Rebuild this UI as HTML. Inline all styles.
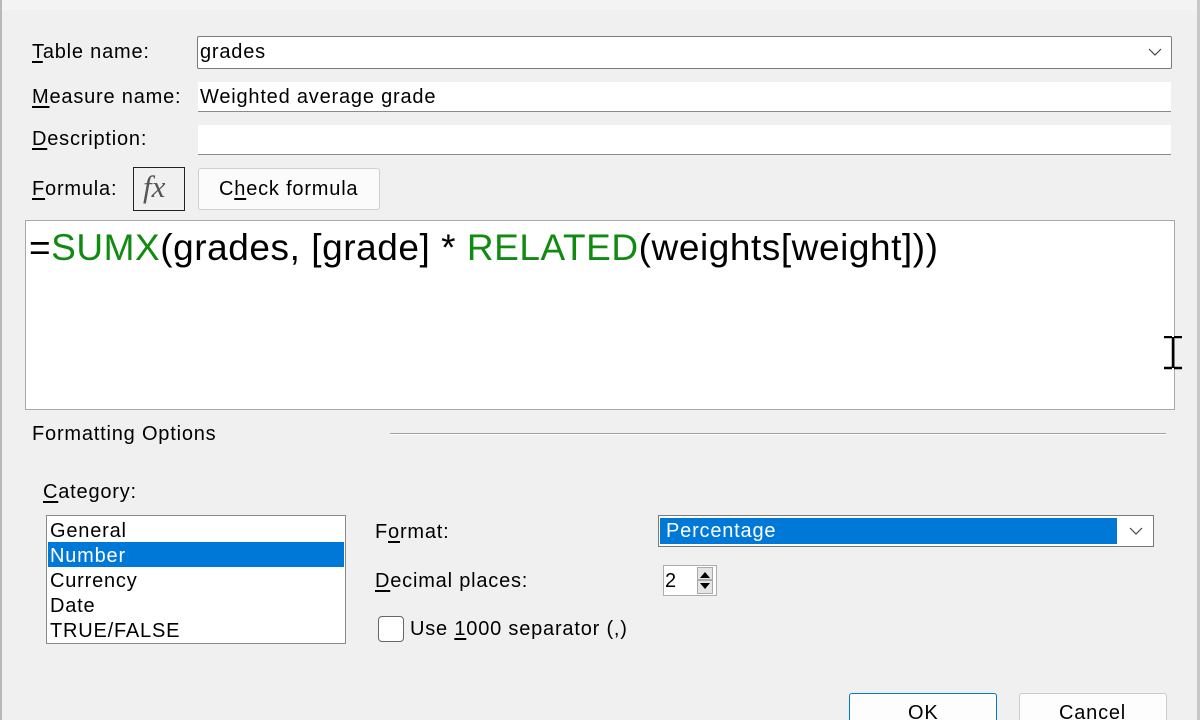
<!DOCTYPE html>
<html style="overflow:hidden"><head><style>
html,body{overflow:hidden}
body{margin:0;width:1200px;height:720px;background:#f0f0f0;position:relative;overflow:hidden;font-family:"Liberation Sans",sans-serif;font-size:20px;letter-spacing:0.8px;color:#000}
.a{position:absolute;white-space:nowrap}
.box{position:absolute;background:#fff;box-sizing:border-box}
u{text-decoration:underline;text-underline-offset:3px}
</style></head><body>
<div class="a" style="left:0;top:0;width:1200px;height:11px;background:#f3f3f3"></div>
<div class="a" style="left:0;top:0;width:2px;height:720px;background:#b8b8b8"></div>
<div class="a" style="left:1197px;top:0;width:3px;height:720px;background:#c8c8c8"></div>

<div class="a" style="left:32px;top:41px"><u>T</u>able name:</div>
<div class="box" style="left:197px;top:36px;width:975px;height:33px;border:1px solid #7a7a7a;border-radius:2px"></div>
<div class="a" style="left:200px;top:41px">grades</div>
<svg class="a" style="left:1148px;top:47px" width="14" height="10"><path d="M1 2 L7 8 L13 2" fill="none" stroke="#444" stroke-width="1.2"/></svg>

<div class="a" style="left:32px;top:86px"><u>M</u>easure name:</div>
<div class="box" style="left:198px;top:82px;width:973px;height:30px;border-bottom:1px solid #8a8a8a"></div>
<div class="a" style="left:200px;top:86px">Weighted average grade</div>

<div class="a" style="left:32px;top:128px"><u>D</u>escription:</div>
<div class="box" style="left:198px;top:125px;width:973px;height:30px;border-bottom:1px solid #8a8a8a"></div>

<div class="a" style="left:32px;top:178px"><u>F</u>ormula:</div>
<div class="box" style="left:133px;top:167px;width:52px;height:44px;border:1px solid #222;background:#f0f0f0"></div>
<div class="a" style="left:143px;top:169px;font-family:'Liberation Serif',serif;font-style:italic;font-size:31px;color:#555;letter-spacing:0">fx</div>
<div class="box" style="left:198px;top:168px;width:182px;height:42px;border:1px solid #d0d0d0;border-radius:3px;background:#fbfbfb"></div>
<div class="a" style="left:219px;top:178px">C<u>h</u>eck formula</div>

<div class="box" style="left:25px;top:220px;width:1150px;height:190px;border:1px solid #a8a8a8"></div>
<div class="a" style="left:29px;top:227px;font-size:37px;letter-spacing:0.55px">=<span style="color:#118a11">SUMX</span>(grades, [grade] * <span style="color:#118a11">RELATED</span>(weights[weight]))</div>
<svg class="a" style="left:1163px;top:336px" width="22" height="34"><path d="M1 1H9M11 1H19M10 1V32M1 32H9M11 32H19" stroke="#000" stroke-width="2.5" fill="none"/></svg>

<div class="a" style="left:32px;top:423px">Formatting Options</div>
<div class="a" style="left:390px;top:433px;width:776px;height:1px;background:#a0a0a0;border-bottom:1px solid #fff"></div>

<div class="a" style="left:43px;top:481px"><u>C</u>ategory:</div>
<div class="box" style="left:46px;top:515px;width:300px;height:129px;border:1px solid #8a8a8a"></div>
<div class="a" style="left:48px;top:542px;width:296px;height:25px;background:#0078d7"></div>
<div class="a" style="left:50px;top:519px;line-height:25px">General<br><span style="color:#fff">Number</span><br>Currency<br>Date<br>TRUE/FALSE</div>

<div class="a" style="left:375px;top:521px">F<u>o</u>rmat:</div>
<div class="box" style="left:658px;top:515px;width:496px;height:32px;border:1px solid #7a7a7a"></div>
<div class="a" style="left:660px;top:518px;width:457px;height:26px;background:#0078d7"></div>
<div class="a" style="left:666px;top:520px;color:#fff">Percentage</div>
<svg class="a" style="left:1129px;top:526px" width="14" height="10"><path d="M1 2 L7 8 L13 2" fill="none" stroke="#444" stroke-width="1.2"/></svg>

<div class="a" style="left:375px;top:570px"><u>D</u>ecimal places:</div>
<div class="box" style="left:663px;top:565px;width:54px;height:31px;border:1px solid #adadad"></div>
<div class="a" style="left:665px;top:570px">2</div>
<div class="a" style="left:697px;top:567px;width:16px;height:13px;background:#e5e5e5;border:1px solid #aaa;box-sizing:border-box"></div>
<div class="a" style="left:697px;top:580px;width:16px;height:14px;background:#e5e5e5;border:1px solid #aaa;box-sizing:border-box"></div>
<svg class="a" style="left:697px;top:567px" width="16" height="27"><path d="M3 11L8 5L13 11Z M3 16L13 16L8 22Z" fill="#000"/></svg>

<div class="box" style="left:378px;top:616px;width:26px;height:26px;border:1px solid #666;border-radius:4px"></div>
<div class="a" style="left:410px;top:618px">Use <u>1</u>000 separator (,)</div>

<div class="box" style="left:849px;top:693px;width:148px;height:27px;border:1px solid #0078d7;border-bottom:none;border-radius:3px 3px 0 0;background:#fdfdfd"></div>
<div class="a" style="left:908px;top:702px">OK</div>
<div class="box" style="left:1019px;top:693px;width:148px;height:27px;border:1px solid #ccc;border-bottom:none;border-radius:3px 3px 0 0;background:#fdfdfd"></div>
<div class="a" style="left:1059px;top:702px">Cancel</div>
</body></html>
